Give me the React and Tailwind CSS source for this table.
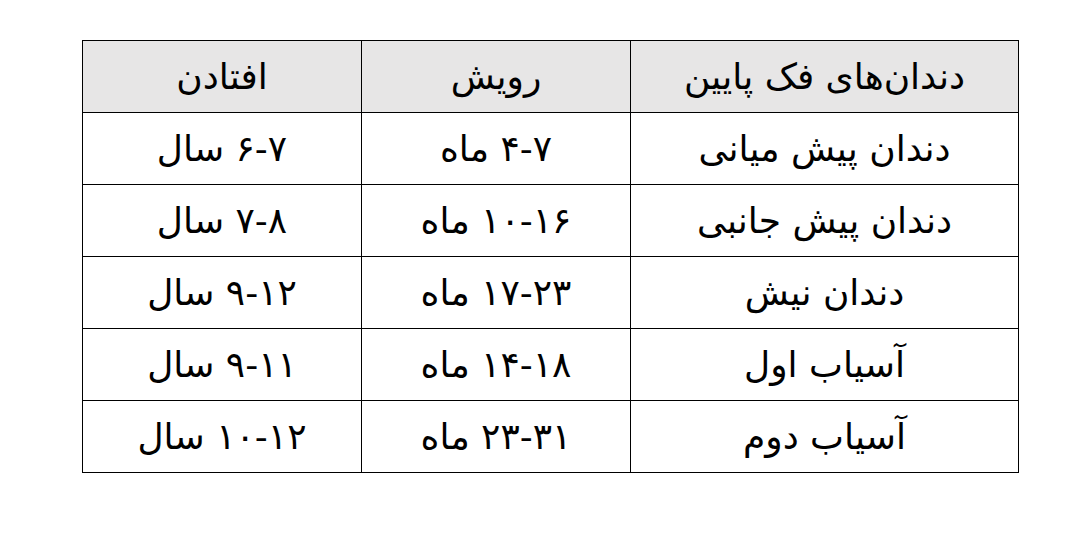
const header = ["دندان‌های فک پایین", "رویش", "افتادن"];

const rows = [
  ["دندان پیش میانی", "۴-۷ ماه", "۶-۷ سال"],
  ["دندان پیش جانبی", "۱۰-۱۶ ماه", "۷-۸ سال"],
  ["دندان نیش", "۱۷-۲۳ ماه", "۹-۱۲ سال"],
  ["آسیاب اول", "۱۴-۱۸ ماه", "۹-۱۱ سال"],
  ["آسیاب دوم", "۲۳-۳۱ ماه", "۱۰-۱۲ سال"],
];

export default function App() {
  return (
    <div className="w-[1072px] h-[537px] bg-white pt-10 pl-[82px]">
      <table
        dir="rtl"
        className="border-collapse text-black text-[36px] leading-none font-['DejaVu_Sans',sans-serif]"
      >
        <thead>
          <tr className="bg-[#e7e6e6]">
            {header.map((h, i) => (
              <th
                key={i}
                className={`border border-black h-[72px] font-normal text-center ${
                  i === 0 ? "w-[388px]" : i === 1 ? "w-[269px]" : "w-[279px]"
                }`}
              >
                {h}
              </th>
            ))}
          </tr>
        </thead>
        <tbody>
          {rows.map((r, ri) => (
            <tr key={ri}>
              {r.map((c, ci) => (
                <td key={ci} className="border border-black h-[72px] text-center">
                  {c}
                </td>
              ))}
            </tr>
          ))}
        </tbody>
      </table>
    </div>
  );
}
